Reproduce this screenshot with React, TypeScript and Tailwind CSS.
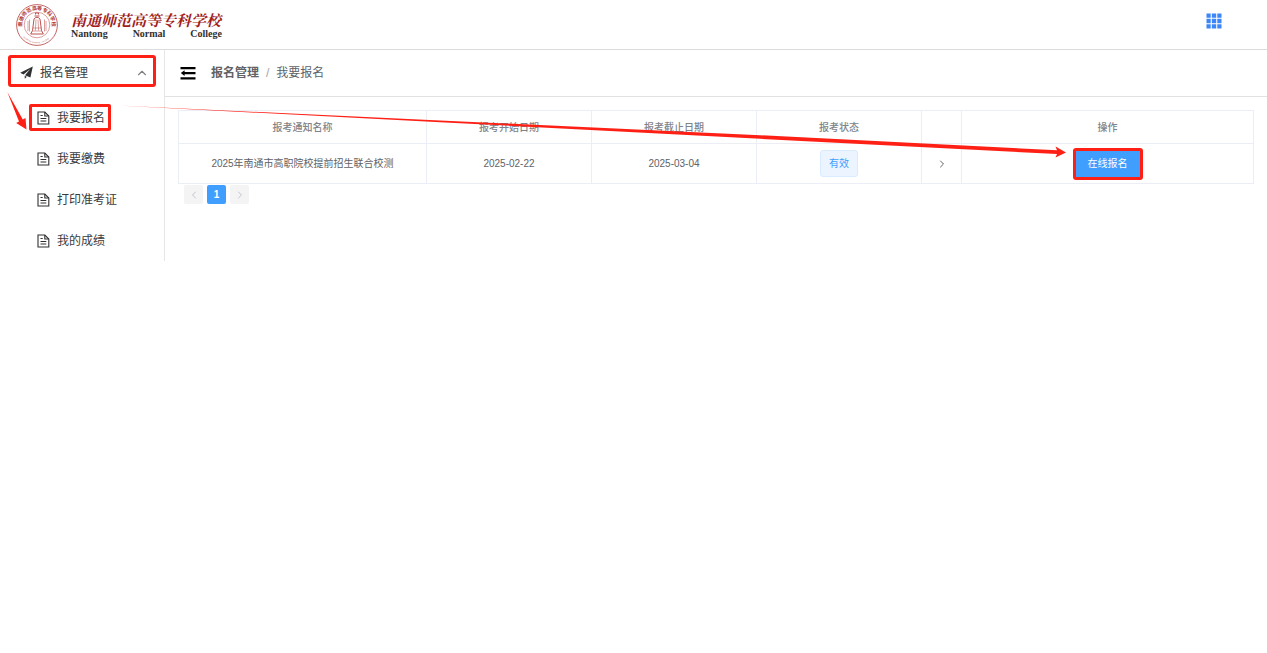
import { useState } from 'react';
import { ChevronLeft, ChevronRight, ChevronUp } from 'lucide-react';

const menuItems = [
  { id: 1, label: '我要报名' },
  { id: 2, label: '我要缴费' },
  { id: 3, label: '打印准考证' },
  { id: 4, label: '我的成绩' },
];

const notices = [
  {
    id: 1,
    name: '2025年南通市高职院校提前招生联合校测',
    start: '2025-02-22',
    end: '2025-03-04',
    status: '有效',
  },
];

function Seal() {
  return (
    <svg viewBox="0 0 42 42" className="h-[42px] w-[42px]" fill="none" stroke="#b5403c">
      <defs>
        <path id="seal-top" d="M8 28.5 A15 15 0 1 1 34 28.5" />
        <path id="seal-bottom" d="M5 30 A18.4 18.4 0 0 0 37 30" />
      </defs>
      <circle cx="21" cy="21" r="20.4" strokeWidth="0.8" />
      <circle cx="21" cy="21" r="12.8" strokeWidth="0.5" />
      <g stroke="none" fill="#b03430">
        <text fontSize="5" fontWeight="bold" fontFamily="Noto Sans CJK SC, sans-serif">
          <textPath href="#seal-top" startOffset="6">南通师范高等专科学校</textPath>
        </text>
        <text fontSize="2" fontFamily="Liberation Serif, serif">
          <textPath href="#seal-bottom" startOffset="4">NANTONG NORMAL COLLEGE</textPath>
        </text>
      </g>
      {/* Bell */}
      <path d="M19.5 10.5 v-1.5 h3 v1.5 M18.5 12 h5 M18 15 q3 -3.5 6 0 l1.5 11.5 l1.8 3.5 h-12.6 l1.8 -3.5 z" strokeWidth="0.9" />
      <path d="M20 15.5 l-0.6 11 M22 15.5 l0.6 11 M17 24 h8 M16.3 27 h9.4" strokeWidth="0.5" />
      <path d="M12 17 v10 M30 17 v10 M13.5 15.5 v12 M28.5 15.5 v12" strokeWidth="0.5" />
    </svg>
  );
}

function DocumentIcon() {
  return (
    <svg viewBox="0 0 13 14" className="h-[14px] w-[13px]" fill="none" stroke="#303133" strokeWidth="1.1">
      <path d="M1 1 H7.8 L11.8 5 V13 H1 Z" />
      <path d="M7.8 1 V5 H11.8" />
      <path d="M3.5 4.5 H5.7 M3.5 7.5 H9.3 M3.5 10 H9.3" />
    </svg>
  );
}

export default function App() {
  const [open, setOpen] = useState(true);

  return (
    <div className="relative min-h-screen bg-white font-['Liberation_Sans','Noto_Sans_CJK_SC',sans-serif] text-[#3a3c40]">
      <header className="flex h-[50px] items-center justify-between border-b border-[#dcdcdc] pr-[45px] pl-4">
        <div className="flex items-center gap-[13px]">
          <Seal />
          <div className="flex w-[151px] flex-col">
            <span className="font-['Noto_Serif_CJK_SC','Noto_Sans_CJK_SC',serif] text-[15px] leading-[18px] font-bold whitespace-nowrap text-[#a01c1c] italic">
              南通师范高等专科学校
            </span>
            <span className="flex justify-between font-['Liberation_Serif',serif] text-[10px] leading-[10px] font-bold text-[#303133]">
              <span>Nantong</span>
              <span>Normal</span>
              <span>College</span>
            </span>
          </div>
        </div>
        <button type="button" aria-label="应用" className="mb-[7px]">
          <svg viewBox="0 0 16 16" className="h-4 w-4" fill="#3d86f8">
            <path d="M0.5 0.5h4.2v4.2h-4.2z M5.8 0.5h4.4v4.2h-4.4z M11.3 0.5h4.2v4.2h-4.2z M0.5 5.8h4.2v4.4h-4.2z M5.8 5.8h4.4v4.4h-4.4z M11.3 5.8h4.2v4.4h-4.2z M0.5 11.3h4.2v4.2h-4.2z M5.8 11.3h4.4v4.2h-4.4z M11.3 11.3h4.2v4.2h-4.2z" />
          </svg>
        </button>
      </header>

      <div className="flex items-start">
        <aside className="w-[165px] shrink-0 border-r border-[#e6e6e6]">
          <div className="h-[47px] px-2 pt-[5px]">
            <button
              type="button"
              onClick={() => setOpen(!open)}
              className="flex h-8 w-full items-center rounded-[3px] border-[3px] border-[#ff2015] pt-[3px] pr-1 pl-[9px] text-xs"
            >
              <svg viewBox="0 0 13 13" className="mr-[7px] h-[13px] w-[13px]" fill="#303133">
                <path d="M12.8 0.4 L0.2 6.8 L3.5 8.6 L10.3 3 L5 9.2 L10.4 11.6 Z" />
                <path d="M4.6 9.8 L6.8 10.8 L4.8 12.8 Z" />
              </svg>
              报名管理
              <ChevronUp className="ml-auto h-[14px] w-[14px] text-[#808080]" strokeWidth={2} />
            </button>
          </div>
          {open && (
            <ul>
              {menuItems.map((item) => (
                <li key={item.id} className="flex h-[41px] items-center pl-[29px]">
                  <a
                    href="#"
                    className={`flex h-[27px] items-center gap-[7px] rounded-[2px] border-[3px] pr-[3px] pl-[5px] text-xs ${
                      item.id === 1 ? 'border-[#ff2015]' : 'border-transparent'
                    }`}
                  >
                    <DocumentIcon />
                    {item.label}
                  </a>
                </li>
              ))}
            </ul>
          )}
        </aside>

        <main className="min-w-0 flex-1">
          <div className="flex h-[47px] items-center border-b border-[#e2e2e2] pl-[15px]">
            <button type="button" aria-label="收起菜单" className="mr-[15px]">
              <svg viewBox="0 0 16 14" className="h-[14px] w-4" fill="#000">
                <path d="M0.5 1h15v2.2h-15z M5.5 6h10v2.2h-10z M0.5 11.2h15v2.2h-15z M0.8 7.1l3.8 -2.8v1.7h2v2.2h-2v1.7z" />
              </svg>
            </button>
            <nav className="flex items-center text-xs text-[#606266]">
              <a href="#" className="font-bold">报名管理</a>
              <span className="mx-[7px] text-[#a0a4ac]">/</span>
              <span>我要报名</span>
            </nav>
          </div>

          <div className="p-[13px]">
            <table className="w-full table-fixed border-collapse text-center text-[10px] text-[#606266]">
              <colgroup>
                <col className="w-[248px]" />
                <col className="w-[165px]" />
                <col className="w-[165px]" />
                <col className="w-[165px]" />
                <col className="w-10" />
                <col />
              </colgroup>
              <thead>
                <tr className="h-[33px] text-[#808389]">
                  <th className="border border-[#ebeef5] font-medium">报考通知名称</th>
                  <th className="border border-[#ebeef5] font-medium">报考开始日期</th>
                  <th className="border border-[#ebeef5] font-medium">报考截止日期</th>
                  <th className="border border-[#ebeef5] font-medium">报考状态</th>
                  <th className="border border-[#ebeef5] font-medium"></th>
                  <th className="border border-[#ebeef5] font-medium">操作</th>
                </tr>
              </thead>
              <tbody>
                {notices.map((notice) => (
                  <tr key={notice.id} className="h-10">
                    <td className="border border-[#ebeef5]">{notice.name}</td>
                    <td className="border border-[#ebeef5]">{notice.start}</td>
                    <td className="border border-[#ebeef5]">{notice.end}</td>
                    <td className="border border-[#ebeef5]">
                      <span className="inline-flex h-[27px] items-center rounded-[3px] border border-[#d9ecff] bg-[#ecf5ff] px-2 align-middle text-[#409eff]">
                        {notice.status}
                      </span>
                    </td>
                    <td className="border border-[#ebeef5]">
                      <button type="button" aria-label="展开" className="block w-full">
                        <ChevronRight className="mx-auto h-3 w-3" strokeWidth={2} />
                      </button>
                    </td>
                    <td className="border border-[#ebeef5]">
                      <button
                        type="button"
                        className="h-8 rounded-[3px] border-[3px] border-[#ff2015] bg-[#409eff] px-3 align-middle text-white"
                      >
                        在线报名
                      </button>
                    </td>
                  </tr>
                ))}
              </tbody>
            </table>

            <div className="mt-px flex gap-1 pl-[6px] text-[10px]">
              <button type="button" aria-label="上一页" className="flex h-[19px] w-[19px] items-center justify-center rounded-[2px] bg-[#f4f4f5] text-[#c0c4cc]">
                <ChevronLeft className="h-3 w-3" />
              </button>
              <button type="button" className="flex h-[19px] w-[19px] items-center justify-center rounded-[2px] bg-[#409eff] font-bold text-white">
                1
              </button>
              <button type="button" aria-label="下一页" className="flex h-[19px] w-[19px] items-center justify-center rounded-[2px] bg-[#f4f4f5] text-[#c0c4cc]">
                <ChevronRight className="h-3 w-3" />
              </button>
            </div>
          </div>
        </main>
      </div>

      {/* Guide arrows over the page */}
      <svg
        viewBox="0 0 1267 262"
        preserveAspectRatio="none"
        className="pointer-events-none absolute top-0 left-0 h-[262px] w-full"
        fill="#ff2015"
      >
        <path d="M118 105.5 L440 120.4 L760 135.2 L1057 150.3 L1055.5 146.5 L1066 152.5 L1055.5 157.5 L1057 154 L760 138.8 L440 122.2 Z" />
      </svg>
      <svg
        viewBox="0 0 30 40"
        className="pointer-events-none absolute top-[91px] left-0 h-10 w-[30px]"
        fill="#ff2015"
      >
        <path d="M7.3 1 L22.8 28.5 L25.5 27 L26.5 38.5 L16.2 32 L19 30.5 Z" />
      </svg>
    </div>
  );
}
